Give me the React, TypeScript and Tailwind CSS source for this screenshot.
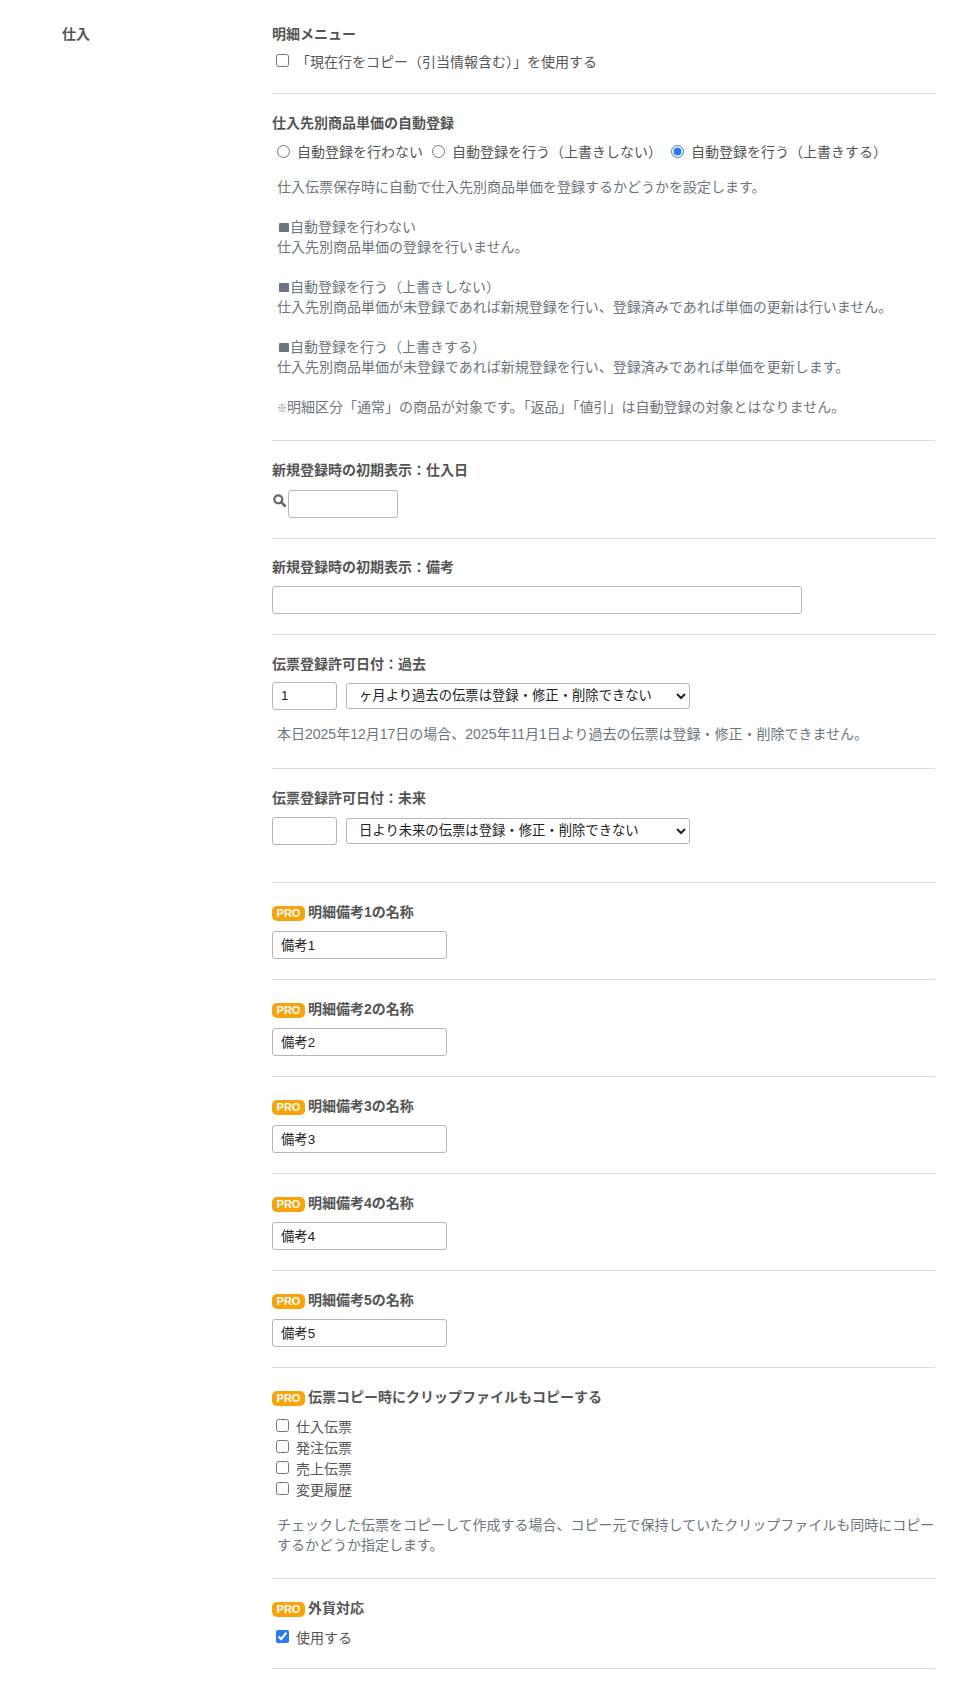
const ProBadge = () => (
  <span className="inline-block w-[33px] h-[15px] mr-[3px] rounded-[5px] bg-[#f9a30b] text-white text-[11px] leading-[15px] text-center align-[0px]">PRO</span>
);

const Label = ({ pro, children, className }: { pro?: boolean; children: React.ReactNode; className?: string }) => (
  <div className={`h-[21px] leading-[21px] font-bold text-[#555] ${className ?? 'mb-[8px]'}`}>
    {pro && <ProBadge />}
    {children}
  </div>
);

const Check = ({ label, checked }: { label: string; checked?: boolean }) => (
  <label className="flex items-center h-[21px] pl-[4px] text-[#555]">
    <input type="checkbox" defaultChecked={checked} className="w-[13px] h-[13px] m-0 mr-[7px] mb-[4px] accent-[#2b78f6]" />
    {label}
  </label>
);

const Radio = ({ label, checked }: { label: string; checked?: boolean }) => (
  <label className="flex items-center text-[#555] mr-[9px]">
    <input type="radio" name="auto" defaultChecked={checked} className="w-[13px] h-[13px] m-0 mr-[7px] mb-[2px] accent-[#2b78f6]" />
    {label}
  </label>
);

const Help = ({ children, className }: { children: React.ReactNode; className?: string }) => (
  <p className={`pl-[5px] text-[#6c757d] leading-[20px] ${className ?? ''}`}>{children}</p>
);

// the reference's square bullet is wider and lower than the font's ■
const Bullet = () => <span className="inline-block w-[10px] h-[9px] ml-[2px] mr-px rounded-[1px] bg-[#6c757d]" />;

const TextBox = ({ value, className }: { value?: string; className: string }) => (
  <input
    type="text"
    defaultValue={value}
    className={`h-[28px] px-2 pb-[2px] border border-[#b5b5b5] rounded-[3px] bg-white text-[13.33px] text-[#222] outline-none ${className}`}
  />
);

const Select = ({ text }: { text: string }) => (
  <select className="w-[344px] h-[26px] ml-[9px] pb-[2px] border border-[#b5b5b5] rounded-[3px] bg-white pl-[8px] text-[13.33px] text-[#222] outline-none">
    <option>{text}</option>
  </select>
);

const Section = ({ children, className }: { children: React.ReactNode; className?: string }) => (
  <section className={`border-b border-[#dcdcdc] ${className ?? 'pt-[19px] pb-[20px]'}`}>{children}</section>
);

const remarks = [1, 2, 3, 4, 5];
const slips = ['仕入伝票', '発注伝票', '売上伝票', '変更履歴'];

export default function App() {
  return (
    <main
      className="w-[972px] h-[1688px] overflow-hidden bg-white flex text-[14px]"
      style={{ fontFamily: '"Liberation Sans", "Noto Sans CJK JP", sans-serif' }}
    >
      <div className="w-[272px] shrink-0 pl-[62px] pt-[24px] leading-[21px] font-bold text-[#555]">仕入</div>
      <div className="w-[663px]">
        {/* 明細メニュー */}
        <Section className="pt-[24px] pb-[20px]">
          <Label className="mb-[7px]">明細メニュー</Label>
          <Check label="「現在行をコピー（引当情報含む）」を使用する" />
        </Section>

        <Section className="pt-[19px] pb-[21px]">
          <Label>仕入先別商品単価の自動登録</Label>
          <div className="flex h-[21px] pl-[5px]">
            <Radio label="自動登録を行わない" />
            <Radio label="自動登録を行う（上書きしない）" />
            <Radio label="自動登録を行う（上書きする）" checked />
          </div>
          <Help className="mt-[14px]">
            仕入伝票保存時に自動で仕入先別商品単価を登録するかどうかを設定します。
            <br /><br />
            <Bullet />自動登録を行わない<br />
            仕入先別商品単価の登録を行いません。
            <br /><br />
            <Bullet />自動登録を行う（上書きしない）<br />
            仕入先別商品単価が未登録であれば新規登録を行い、登録済みであれば単価の更新は行いません。
            <br /><br />
            <Bullet />自動登録を行う（上書きする）<br />
            仕入先別商品単価が未登録であれば新規登録を行い、登録済みであれば単価を更新します。
            <br /><br />
            <span className="text-[10px] font-bold">※</span>明細区分「通常」の商品が対象です。「返品」「値引」は自動登録の対象とはなりません。
          </Help>
        </Section>

        <Section>
          <Label className="mb-[9px]">新規登録時の初期表示：仕入日</Label>
          <div className="flex">
            <svg viewBox="0 0 12 12" className="w-[13px] h-[13px] mt-[4px] ml-[1px] mr-[2px]">
              <circle cx="4.9" cy="4.9" r="3.7" fill="none" stroke="#666" strokeWidth="2" />
              <path d="M7.6 7.6l3.4 3.4" stroke="#666" strokeWidth="2.4" strokeLinecap="round" />
            </svg>
            <TextBox className="w-[110px]" />
          </div>
        </Section>

        <Section className="pt-[18px] pb-[20px]">
          <Label>新規登録時の初期表示：備考</Label>
          <TextBox className="block w-[530px]" />
        </Section>

        <Section className="pt-[19px] pb-[24px]">
          <Label className="mb-[7px]">伝票登録許可日付：過去</Label>
          <div className="flex items-center">
            <TextBox value="1" className="w-[65px]" />
            <Select text="ヶ月より過去の伝票は登録・修正・削除できない" />
          </div>
          <Help className="mt-[14px]">本日2025年12月17日の場合、2025年11月1日より過去の伝票は登録・修正・削除できません。</Help>
        </Section>

        <Section className="pt-[19px] pb-[37px]">
          <Label>伝票登録許可日付：未来</Label>
          <div className="flex items-center">
            <TextBox className="w-[65px]" />
            <Select text="日より未来の伝票は登録・修正・削除できない" />
          </div>
        </Section>

        {remarks.map((n) => (
          <Section key={n}>
            <Label pro>明細備考{n}の名称</Label>
            <TextBox value={`備考${n}`} className="block w-[175px]" />
          </Section>
        ))}

        <Section className="pt-[19px] pb-[23px]">
          <Label pro className="mb-[9px]">伝票コピー時にクリップファイルもコピーする</Label>
          {slips.map((s) => (
            <Check key={s} label={s} />
          ))}
          <Help className="mt-[14px]">
            チェックした伝票をコピーして作成する場合、コピー元で保持していたクリップファイルも同時にコピーするかどうか指定します。
          </Help>
        </Section>

        <Section className="pt-[19px] pb-[19px]">
          <Label pro className="mb-[9px]">外貨対応</Label>
          <Check label="使用する" checked />
        </Section>
      </div>
    </main>
  );
}
